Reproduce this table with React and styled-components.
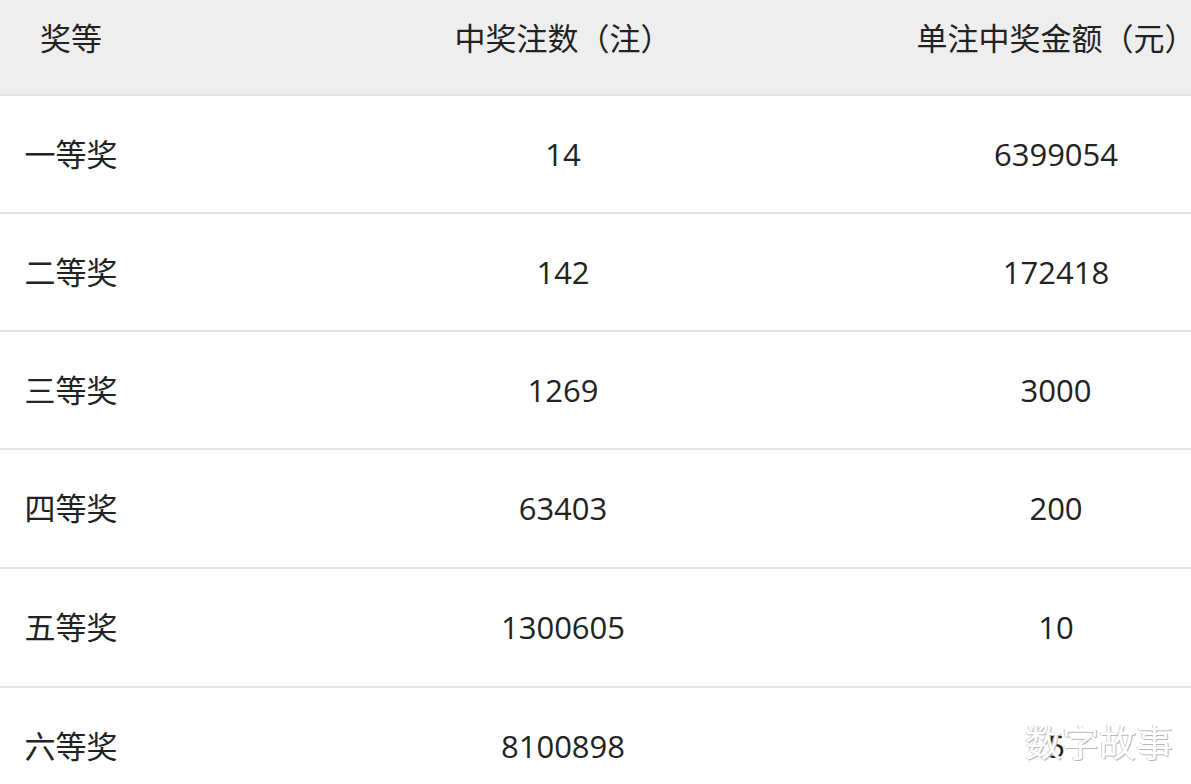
import React from "react";
import styled, { createGlobalStyle } from "styled-components";

const Global = createGlobalStyle`
  html, body { margin: 0; padding: 0; background: #fff; }
  body { font-family: "Noto Sans CJK SC", "Noto Sans", sans-serif; overflow: hidden; }
`;

const Page = styled.div`
  position: relative;
  width: 1191px;
  height: 784px;
  overflow: hidden;
  background: #fff;
`;

const Row = styled.div`
  display: grid;
  grid-template-columns: 142px 842px 144px;
  height: 116px;
  background: #fff;
  border-bottom: 2px solid #e4e4e4;
  &:nth-child(n + 5) {
    height: 117px;
  }
`;

const HeadRow = styled(Row)`
  height: 76px;
  padding-bottom: 18px;
  background: #eeeeee;
`;

const Cell = styled.div`
  display: flex;
  align-items: center;
  justify-content: center;
  white-space: nowrap;
  font-family: "Open Sans", "Noto Sans CJK SC", sans-serif;
  font-size: 31px;
  color: #222;
  line-height: 1;
`;

const Watermark = styled.div`
  position: absolute;
  right: 18px;
  bottom: 24px;
  font-size: 37px;
  color: #fff;
  text-shadow: 1px 1px 0 #b8b8b8, -1px 0 0 #d0d0d0;
  font-family: "Noto Sans CJK SC", sans-serif;
  line-height: 1;
`;

const rows = [
  ["一等奖", "14", "6399054"],
  ["二等奖", "142", "172418"],
  ["三等奖", "1269", "3000"],
  ["四等奖", "63403", "200"],
  ["五等奖", "1300605", "10"],
  ["六等奖", "8100898", "5"],
];

export default function App() {
  return (
    <Page>
      <Global />
      <HeadRow>
        <Cell>奖等</Cell>
        <Cell>中奖注数（注）</Cell>
        <Cell>单注中奖金额（元）</Cell>
      </HeadRow>
      {rows.map((r) => (
        <Row key={r[0]}>
          <Cell>{r[0]}</Cell>
          <Cell>{r[1]}</Cell>
          <Cell>{r[2]}</Cell>
        </Row>
      ))}
      <Watermark>数字故事</Watermark>
    </Page>
  );
}
